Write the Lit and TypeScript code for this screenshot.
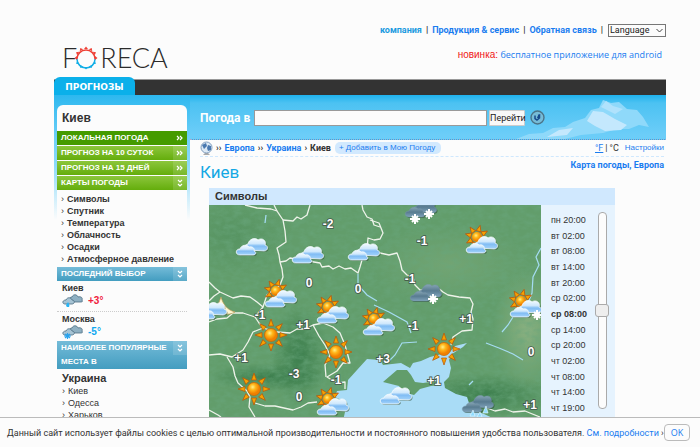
import { LitElement, html, svg, css } from "lit";
import { customElement, state } from "lit/decorators.js";
import { classMap } from "lit/directives/class-map.js";

type Point = [number, number];

const TIMES = [
  "пн 20:00", "вт 02:00", "вт 08:00", "вт 14:00", "вт 20:00", "ср 02:00", "ср 08:00",
  "ср 14:00", "ср 20:00", "чт 02:00", "чт 08:00", "чт 14:00", "чт 19:00",
];

const BORDERS = [
  "M36 0L48 3L62 4L68 6L74 15L76 26L77 37L68 43L70 50L71 57L73 64L74 72L71 80L58 90L54 102",
  "M65 0L68 6",
  "M74 15L84 16L88 12L92 14L98 10L101 0",
  "M71 57L77 56L81 53L111 58L113 62L120 61L124 64L130 61L136 64L142 63L149 68L151 62L153 55L158 45L159 33L165 35L171 34L174 28L170 18L161 15",
  "M153 0L154 5L158 12L163 14L165 20L171 22",
  "M171 48L180 50L188 48L191 56L193 65L198 70L204 72L206 80L211 85L222 86L228 82L234 87L239 90L250 92L261 93L264 99L262 107L264 114L263 125L253 126L244 132L242 140",
  "M0 77L6 83L11 87L24 93L32 91L41 92L48 97L54 102L46 112L34 108L24 108L18 113L8 114L0 117",
  "M11 87L5 91L0 96",
  "M46 112L50 118L54 123L44 127L39 137L34 145L23 152L11 149L0 150",
  "M54 123L68 127L81 128L88 124L96 124L104 120L114 118L124 122L131 128L136 140L141 158L134 158L128 166L118 172L128 178L136 177L136 184",
  "M104 120L110 131L116 140L121 150L116 160L117 172",
  "M18 152L24 162L26 171L29 178L38 186L41 192L40 202L46 212",
  "M46 198L56 201L66 201L84 205L92 202L99 198L108 197",
  "M0 205L9 210L12 212",
  "M278 203L286 206L296 204L304 207L316 206L331 212",
];

const RIVERS = [
  "M332 43L327 52L330 60L324 72L323 88L319 98",
  "M165 100L180 107L198 117L202 128",
  "M208 137L193 138L186 150L180 156",
  "M304 112L299 120L293 127",
  "M277 138L290 143L304 149L314 155",
  "M149 69L149 80L158 90L168 96",
  "M57 10L56 18",
  "M260 180L264 176",
];

const LABELS: [string, number, number][] = [
  ["-2", 119, 19], ["-1", 213, 36], ["-1", 201, 74], ["0", 100, 78], ["0", 149, 84],
  ["-1", 51, 110], ["+1", 94, 120], ["-1", 204, 121], ["+1", 257, 114], ["+1", 32, 153],
  ["+3", 174, 154], ["-3", 85, 169], ["-1", 127, 175], ["0", 90, 192], ["+1", 225, 176],
  ["0", 322, 147], ["+1", 321, 200],
];

const CLOUDS: Point[] = [[43, 42], [99, 50], [155, 47], [187, 191]];
const SUNS: Point[] = [[62, 130], [127, 147], [45, 184], [235, 144]];
const FAIR: Point[] = [[268, 32], [67, 86], [119, 102], [165, 114], [119, 194], [312, 96]];

const CLOUD_BACK = "M-4 3C-8 3 -9-2 -4-3C-3-8 3-10 6-7C10-10 15-6 13-2C17-1 16 4 12 4Z";
const CLOUD_FRONT = "M-12 8C-17 8 -17 2 -12 2C-11-2 -5-3 -3 0C1-1 3 2 2 4C5 5 4 8 1 8Z";

const cloud = (x: number, y: number, tone = "day") => svg`
  <g transform="translate(${x} ${y})" class="cloud ${tone}">
    <path class="shade" d=${CLOUD_FRONT} transform="translate(1 1)" />
    <path class="shade" d=${CLOUD_BACK} transform="translate(1 1)" />
    <path d=${CLOUD_BACK} />
    <path d=${CLOUD_FRONT} />
  </g>`;

const sun = (x: number, y: number) => svg`
  <g transform="translate(${x} ${y})">
    ${[0, 45, 90, 135, 180, 225, 270, 315].map(
      (a) => svg`<path class="ray" d="M-2.500-9L0-16L2.500-9Z" transform="rotate(${a})" />`,
    )}
    <circle r="6.500" fill="url(#disc)" stroke="#c96a08" stroke-width="0.8" />
  </g>`;

const fair = (x: number, y: number) => svg`
  <g transform="translate(${x} ${y})">
    ${[-75, -35, 15, 60, 200, 240].map(
      (a) => svg`<path class="ray" d="M-2.500-6L0-12L2.500-6Z" transform="rotate(${a})" />`,
    )}
    <circle r="5" fill="url(#disc)" />
    ${cloud(5, 8)}
  </g>`;

const flake = (x: number, y: number) => svg`
  <path class="flake" transform="translate(${x} ${y})" d="M-5 0H5M0-5V5M-3-3L3 3M3-3L-3 3" />`;

@customElement("weather-map")
class WeatherMap extends LitElement {
  static styles = css`
    :host { display: block; overflow: hidden; }
    svg { display: block; width: 100%; height: 216px; }
    .border { fill: none; stroke: #eef3ea; stroke-width: 1.3; stroke-linejoin: round; }
    .river { fill: none; stroke: #a5dcf2; stroke-width: 1.2; }
    .sea { fill: #a9dcf6; }
    .land { fill: #629d6b; }
    .cloud path { fill: url(#day); stroke: #f4fbff; stroke-width: 0.8; }
    .cloud.grey path { fill: url(#grey); stroke: #7795a8; stroke-width: 0.5; }
    .cloud .shade, .cloud.grey .shade { fill: #24452e; stroke: none; opacity: 0.55; }
    .ray { fill: #f6a000; stroke: #b4540c; stroke-width: 0.7; }
    .flake { fill: none; stroke: #fff; stroke-width: 2; }
    .label {
      font: bold 12px "Liberation Sans", Arial, sans-serif;
      fill: #fff; stroke: #43564a; stroke-width: 1.6; paint-order: stroke; text-anchor: middle;
    }
  `;

  render() {
    return html`
      <svg viewBox="0 0 332 216" preserveAspectRatio="xMidYMin slice" role="img" aria-label="Символы">
        <defs>
          <linearGradient id="day" x2="0" y2="1">
            <stop offset="0" stop-color="#f2faff" /><stop offset=".4" stop-color="#cfe8fc" />
            <stop offset=".6" stop-color="#80bcf4" /><stop offset="1" stop-color="#a5d4fb" />
          </linearGradient>
          <linearGradient id="grey" x2="0" y2="1">
            <stop offset="0" stop-color="#87a5b5" /><stop offset=".5" stop-color="#587b90" />
            <stop offset="1" stop-color="#7fa2ba" />
          </linearGradient>
          <radialGradient id="disc" cx=".4" cy=".35">
            <stop offset="0" stop-color="#fff08a" /><stop offset=".45" stop-color="#ffb81c" />
            <stop offset="1" stop-color="#f08000" />
          </radialGradient>
          <radialGradient id="hill">
            <stop offset="0" stop-color="#2f7443" stop-opacity=".75" />
            <stop offset="1" stop-color="#2f7443" stop-opacity="0" />
          </radialGradient>
          <radialGradient id="steppe">
            <stop offset="0" stop-color="#9ab889" stop-opacity=".7" />
            <stop offset="1" stop-color="#9ab889" stop-opacity="0" />
          </radialGradient>
          <filter id="relief" x="0" y="0" width="100%" height="100%">
            <feTurbulence type="fractalNoise" baseFrequency=".12 .2" numOctaves="4" seed="4" />
            <feColorMatrix values="0 0 0 0 .14  0 0 0 0 .38  0 0 0 0 .2  1.2 0 0 0 -.42" />
          </filter>
        </defs>
        <rect class="land" width="332" height="216" />
        <ellipse cx="90" cy="150" rx="30" ry="50" fill="url(#hill)" />
        <ellipse cx="60" cy="172" rx="60" ry="14" fill="url(#hill)" />
        <ellipse cx="275" cy="190" rx="70" ry="22" fill="url(#hill)" />
        <ellipse cx="25" cy="30" rx="60" ry="40" fill="url(#hill)" opacity=".3" />
        <ellipse cx="318" cy="125" rx="34" ry="60" fill="url(#steppe)" />
        <ellipse cx="240" cy="60" rx="80" ry="40" fill="url(#steppe)" opacity=".4" />
        <rect width="332" height="216" filter="url(#relief)" />
        <path class="sea" d="M134 216L138 198L126 192L128 186L138 185L139 175L148 165L158 154L171 155L174 160L192 158L201 163L204 158L212 156L221 152L241 147L246 141L258 138L254 142L243 149L240 155L242 163L240 172L235 177L236 183L247 189L258 192L262 204L275 209L290 216Z" />
        <path class="land" d="M174 177L181 171L188 165L198 165L202 170L206 177L214 178L228 176L232 180L222 181L211 184L205 190L194 187L190 181Z" />
        ${RIVERS.map((d) => svg`<path class="river" d=${d} />`)}
        ${BORDERS.map((d) => svg`<path class="border" d=${d} />`)}
        ${CLOUDS.map(([x, y]) => cloud(x, y))}
        ${SUNS.map(([x, y]) => sun(x, y))}
        <path d="M12 92C14 99 18 105 26 107C20 111 8 110 9 100Z" fill="#fff6d2" stroke="#b99b55" stroke-width=".7" />
        ${cloud(2, 106)}
        ${LABELS.map(([t, x, y]) => svg`<text class="label" x=${x} y=${y + 4}>${t}</text>`)}
        ${FAIR.map(([x, y]) => fair(x, y))}
        ${cloud(212, 4, "grey")}${flake(206, 14)}${flake(220, 9)}
        ${cloud(217, 88, "grey")}${flake(224, 94)}
        ${cloud(269, 199, "grey")}
        <path d="M264 205l-3 6h5zM277 201l-3 7h5zM271 207l-3 5h5z" fill="#8fdcff" stroke="#e7f8ff" stroke-width=".6" />
        ${flake(328, 110)}
      </svg>
    `;
  }
}

@customElement("app-root")
class AppRoot extends LitElement {
  @state() private step = 6;

  static styles = css`
    :host {
      display: flex; flex-direction: column; height: 100vh; background: #fcfcfc; color: #333;
      font: 9px/12px "Liberation Sans", Arial, sans-serif;
    }
    * { box-sizing: border-box; }
    a { color: #1a7cf0; text-decoration: none; }
    ul, ol, h1, h2, h3, p { margin: 0; padding: 0; list-style: none; }
    button, input, select { font-family: inherit; margin: 0; }
    .page { flex: 1; min-height: 0; overflow-y: auto; scrollbar-width: none; padding: 0 34px 0 54px; }

    .top { display: flex; justify-content: space-between; height: 77px; }
    .logo {
      display: flex; align-items: center; height: 28px; margin: 44px 0 0 8px; color: #2b2b2b;
      font: 300 27px/28px Lato, sans-serif;
    }
    .logo svg { width: 24px; height: 24px; margin: 0 2px 0 -3px; }
    .tools { display: flex; flex-direction: column; align-items: flex-end; padding-top: 23px; gap: 10px; }
    .links { display: flex; align-items: center; gap: 4px; font: bold 9px/14px Roboto, sans-serif; }
    .links .here { color: #1a9ae0; }
    .links select {
      width: 58px; height: 13px; padding: 0 1px; border: 1px solid #777; border-radius: 0; background: #fcfcfc;
      color: #222; font: 9px/11px Roboto, sans-serif; appearance: none;
    }
    .pick { display: grid; align-items: center; margin-left: 1px; }
    .pick > * { grid-area: 1 / 1; }
    .pick svg { width: 7px; height: 5px; justify-self: end; margin-right: 3px; pointer-events: none; }
    .news { margin-right: 4px; font: 9px/16px "Open Sans", sans-serif; }
    .news b { font: 10px/16px "Liberation Sans", Arial, sans-serif; color: #f01818; }

    .bar { display: flex; align-items: flex-end; height: 18px; background: linear-gradient(#fcfcfc 2px, #999 2px, #999 3px, #333 3px); }
    .tab {
      width: 81px; height: 18px; border-radius: 6px 6px 0 0; background: #0bb0ea; color: #fff;
      font: bold 9px/21px "DejaVu Sans", sans-serif; text-align: center;
    }
    .body { display: grid; grid-template-columns: 136px 1fr; }
    .side {
      padding: 10px 3px 0; align-self: start;
      background: linear-gradient(#2db8ef, #6fd0f8 44px, #8cdafa 70px, #fcfcfc 125px) no-repeat;
    }
    .card { background: #fcfcfc; border-radius: 6px 6px 0 0; }
    .card h2 { padding: 6px 5px 5px; font: bold 12px/15px "Liberation Sans", Arial, sans-serif; }
    .menu { display: grid; gap: 1px; }
    .menu a, .head {
      display: flex; justify-content: space-between; color: #fff;
      background: linear-gradient(#8cc63c, #64ad0c); font: bold 8px/14px "Liberation Sans", Arial, sans-serif;
    }
    .menu a.on { background: #459b00; }
    .menu span, .head span:first-child { padding-left: 4px; }
    .menu svg, .head svg { flex: none; width: 14px; height: 14px; background: #ffffff22; }
    .menu .on svg { background: none; }
    .menu path, .head path { fill: none; stroke: #fff; stroke-width: 1.2; }
    .head { background: linear-gradient(#74bbd8, #439dc0); }
    .maps { padding: 3px 4px 2px; font-weight: bold; }
    .maps a, .cities a { color: #333; }
    .maps li::before, .cities li::before { content: "›"; margin-right: 3px; font-weight: normal; }
    .pickrow { height: 30px; padding: 2px 5px 0; }
    .pickrow + .pickrow { border-top: 1px dotted #ccc; }
    .pickrow h3 { font: bold 9px/11px "Liberation Sans", Arial, sans-serif; }
    .now { display: flex; align-items: center; gap: 4px; height: 14px; font-weight: bold; font-size: 10px; }
    .now svg { width: 22px; height: 14px; }
    .warm { color: #f0203c; }
    .cold { color: #10a8f0; }
    .cities { padding: 3px 5px 0; }
    .cities h3 { font: bold 11px/13px "Liberation Sans", Arial, sans-serif; }

    .band { position: relative; height: 45px; border-bottom: 1px dotted #aac; background: linear-gradient(#1fb2ed, #4cc2f2 8px, #6ccdf8 40px); }
    .sky { position: absolute; right: 0; bottom: 0; width: 155px; height: 44px; }
    .search { position: relative; display: flex; align-items: center; height: 45px; padding: 0 121px 0 10px; }
    .search label { width: 54px; flex: none; color: #fff; font: bold 12px/16px Roboto, sans-serif; white-space: nowrap; }
    .search input { flex: 1; min-width: 0; height: 16px; border: 1px solid #999; background: #fcfcfc; padding: 0 3px; font-size: 11px; }
    .search .go {
      width: 36px; height: 16px; margin: 0 5px 0 2px; padding: 0; border: 1px solid #ccc; border-radius: 1px;
      background: #f8f8f8; color: #222; font: 9px/12px Roboto, sans-serif;
    }
    .search .locate { width: 15px; height: 15px; padding: 0; border: 0; background: none; }
    .locate svg, .globe { display: block; width: 15px; height: 15px; }

    .crumbs {
      display: flex; align-items: center; gap: 3px; height: 17px; margin: 0 2px 0 10px;
      border-bottom: 1px dashed #cfe8fe; font: bold 9px/12px Roboto, sans-serif;
    }
    .globe { width: 13px; }
    .add { margin-left: 1px; padding: 0 6px 0 4px; border-radius: 5px; background: #d2e9fe; font: 8px/12px "Liberation Sans", Arial, sans-serif; }
    .units { display: flex; gap: 2px; margin-left: auto; font-weight: normal; }
    .units a { text-decoration: underline; }
    .units a.set { margin-left: 4px; text-decoration: none; font: 8px/12px "Liberation Sans", Arial, sans-serif; }
    .title { display: flex; justify-content: space-between; padding: 0 2px 0 10px; height: 31px; }
    .title h1 { padding-top: 4px; color: #14a8e4; font: 17px/22px Roboto, sans-serif; }
    .title a { padding-top: 2px; font: bold 9px/12px Roboto, sans-serif; }
    .panel { margin: 0 51px 0 19px; background: #e6f3fe; }
    .panel h2 { padding-left: 6px; background: #d0e8fe; color: #333; font: bold 11px/17px "Liberation Sans", Arial, sans-serif; }
    .view { display: grid; grid-template-columns: 1fr 74px; }
    .times { display: flex; gap: 8px; padding: 7px 0 2px 10px; }
    .times ol { display: grid; grid-auto-rows: 1fr; align-items: center; width: 36px; height: 204px; white-space: nowrap; }
    .times .on { font-weight: bold; }
    .slider { appearance: none; writing-mode: vertical-lr; width: 14px; height: 197px; background: none; }
    .slider::-webkit-slider-runnable-track {
      width: 9px; height: 197px; border: 1px solid #aaa; border-radius: 4px; background: #fcfcfc;
    }
    .slider::-webkit-slider-thumb {
      appearance: none; width: 14px; height: 13px; margin-left: -4px; border: 1px solid #aaa; border-radius: 3px; background: #eee;
    }

    .cookies {
      display: flex; align-items: center; height: 30px; padding: 0 10px 0 7px; border-top: 1px solid #bbb;
      background: #fcfcfc; font: 9px/14px Roboto, sans-serif; white-space: nowrap;
    }
    .cookies p { flex: 1; }
    .cookies button {
      width: 26px; height: 17px; padding: 0; border: 1px solid #bbb; border-radius: 4px; background: #fcfcfc;
      color: #1a7cf0; font: 9px/14px "Open Sans", sans-serif;
    }
  `;

  private arrows(down = false) {
    return html`<svg viewBox="0 0 14 14" aria-hidden="true">
      <path d=${down ? "M5 4L7 6L9 4M5 8L7 10L9 8" : "M4 5L6 7L4 9M7 5L9 7L7 9"} />
    </svg>`;
  }

  private weather(kind: "rain" | "snow") {
    return html`<svg viewBox="0 0 22 14" aria-hidden="true">
      <path d="M9 8C6 7 7 3 10 3C11 0 15 0 16 3C19 2 21 4 20 6C21 8 20 8 18 8Z" fill="#8fb0c2" stroke="#4b6c80" stroke-width=".8" />
      <path d="M3 10C0 10 0 6 4 6C5 3 9 3 10 6C13 6 13 10 10 10Z" fill="#a7c4d4" stroke="#4b6c80" stroke-width=".8" />
      ${kind === "rain"
        ? svg`<path d="M6 8C7 10 8 11 7 13H5C3 11 5 10 6 8Z" fill="#28b4f4" />`
        : svg`<path d="M2 11H9M5.500 8V14M3 9L8 13M8 9L3 13" stroke="#28a4f0" stroke-width="1.2" />`}
    </svg>`;
  }

  render() {
    const ring = Array.from({ length: 12 }, (_, i) => i * 30);
    return html`
      <div class="page">
        <header class="top">
          <div class="logo" role="img" aria-label="Foreca">
            <span>F</span>
            <svg viewBox="-12 -12 24 24">
              <path d="M-9 1A9 9 0 0 1 9 1" fill="none" stroke="#ee4036" stroke-width="1.5" />
              <path d="M9 1A9 9 0 0 1 -9 1" fill="none" stroke="#12aee6" stroke-width="1.5" />
              ${ring.map((a) => svg`<path d="M-2-9L0-11.500L2-9Z" transform="rotate(${a})" fill=${a > 95 && a < 265 ? "#12aee6" : "#ee4036"} />`)}
            </svg>
            <span>RECA</span>
          </div>
          <div class="tools">
            <nav class="links">
              <a class="here" href="#">компания</a><span>|</span>
              <a href="#">Продукция &amp; сервис</a><span>|</span>
              <a href="#">Обратная связь</a><span>|</span>
              <div class="pick">
                <select aria-label="Language"><option>Language</option></select>
                <svg viewBox="0 0 7 5"><path d="M0.500 1L3.500 4L6.500 1" fill="none" stroke="#444" /></svg>
              </div>
            </nav>
            <p class="news"><b>новинка:</b> <a href="#">бесплатное приложение для android</a></p>
          </div>
        </header>
        <nav class="bar"><a class="tab" href="#">ПРОГНОЗЫ</a></nav>
        <div class="body">
          <aside class="side">
            <div class="card">
              <h2>Киев</h2>
              <nav class="menu">
                <a class="on" href="#"><span>ЛОКАЛЬНАЯ ПОГОДА</span>${this.arrows()}</a>
                <a href="#"><span>ПРОГНОЗ НА 10 СУТОК</span>${this.arrows()}</a>
                <a href="#"><span>ПРОГНОЗ НА 15 ДНЕЙ</span>${this.arrows()}</a>
                <a href="#"><span>КАРТЫ ПОГОДЫ</span>${this.arrows(true)}</a>
              </nav>
              <ul class="maps">
                ${["Символы", "Спутник", "Температура", "Облачность", "Осадки", "Атмосферное давление"].map(
                  (t) => html`<li><a href="#">${t}</a></li>`,
                )}
              </ul>
              <div class="head"><span>ПОСЛЕДНИЙ ВЫБОР</span>${this.arrows(true)}</div>
              <div class="pickrow"><h3>Киев</h3><div class="now">${this.weather("rain")}<span class="warm">+3°</span></div></div>
              <div class="pickrow"><h3>Москва</h3><div class="now">${this.weather("snow")}<span class="cold">-5°</span></div></div>
              <div class="head"><span>НАИБОЛЕЕ ПОПУЛЯРНЫЕ<br />МЕСТА В</span>${this.arrows(true)}</div>
              <div class="cities">
                <h3>Украина</h3>
                <ul>${["Киев", "Одесса", "Харьков"].map((t) => html`<li><a href="#">${t}</a></li>`)}</ul>
              </div>
            </div>
          </aside>
          <main>
            <div class="band">
              <svg class="sky" viewBox="0 0 155 44" aria-hidden="true">
                <path d="M5 44L18 39L32 38L42 33L54 32L62 27L74 23L80 15L88 13L92 5L100 8L108 7L116 14L126 15L132 22L138 32L128 30L118 34L106 34L92 38L70 40L54 44Z" fill="#8fd9fa" />
                <path d="M76 26L82 16L92 17L104 24L116 30L110 35L94 36L84 31ZM36 42L48 35L62 33L56 40Z" fill="#c4e8fd" />
                <path d="M90 12L95 6L102 11L112 14L104 19Z" fill="#b0e2fc" />
              </svg>
              <form class="search" @submit=${(e: Event) => e.preventDefault()}>
                <label for="q">Погода в</label>
                <input id="q" type="text" />
                <button class="go">Перейти</button>
                <button class="locate" type="button" aria-label="Обновить">
                  <svg viewBox="0 0 15 15"><circle cx="7.500" cy="7.500" r="6.500" fill="#76bcd8" stroke="#4b7488" stroke-width="1.4" />
                    <path d="M5 5.500V8.500L7 10L9.500 8V5L8 5.500M7.500 8L9.500 5" fill="none" stroke="#174a8c" stroke-width="1.5" /></svg>
                </button>
              </form>
            </div>
            <nav class="crumbs">
              <svg class="globe" viewBox="0 0 13 15"><path d="M3 14H10L8 12H5Z" fill="#aaa" />
                <circle cx="6.500" cy="6.500" r="5.500" fill="#dce9f5" stroke="#7f9cbd" />
                <path d="M2 4L6 2L7 5L4 8ZM8 4L11 5V9L8 10L7 7Z" fill="#4a79b0" /></svg>
              <span>››</span><a href="#">Европа</a><span>››</span><a href="#">Украина</a><span>›</span><span>Киев</span>
              <a class="add" href="#">+ Добавить в Мою Погоду</a>
              <div class="units"><a href="#">°F</a><span>|</span><span>°C</span><a class="set" href="#">Настройки</a></div>
            </nav>
            <div class="title"><h1>Киев</h1><a href="#">Карта погоды, Европа</a></div>
            <section class="panel">
              <h2>Символы</h2>
              <div class="view">
                <weather-map></weather-map>
                <div class="times">
                  <ol>${TIMES.map((t, i) => html`<li class=${classMap({ on: i === this.step })}>${t}</li>`)}</ol>
                  <input class="slider" type="range" min="0" max="12" aria-label="Время" .value=${String(this.step)}
                    @input=${(e: Event) => (this.step = Number((e.target as HTMLInputElement).value))} />
                </div>
              </div>
            </section>
          </main>
        </div>
      </div>
      <footer class="cookies">
        <p>Данный сайт использует файлы cookies с целью оптимальной производительности и постоянного повышения удобства пользователя.
          <a href="#">См. подробности</a> ›</p>
        <button>OK</button>
      </footer>
    `;
  }
}
